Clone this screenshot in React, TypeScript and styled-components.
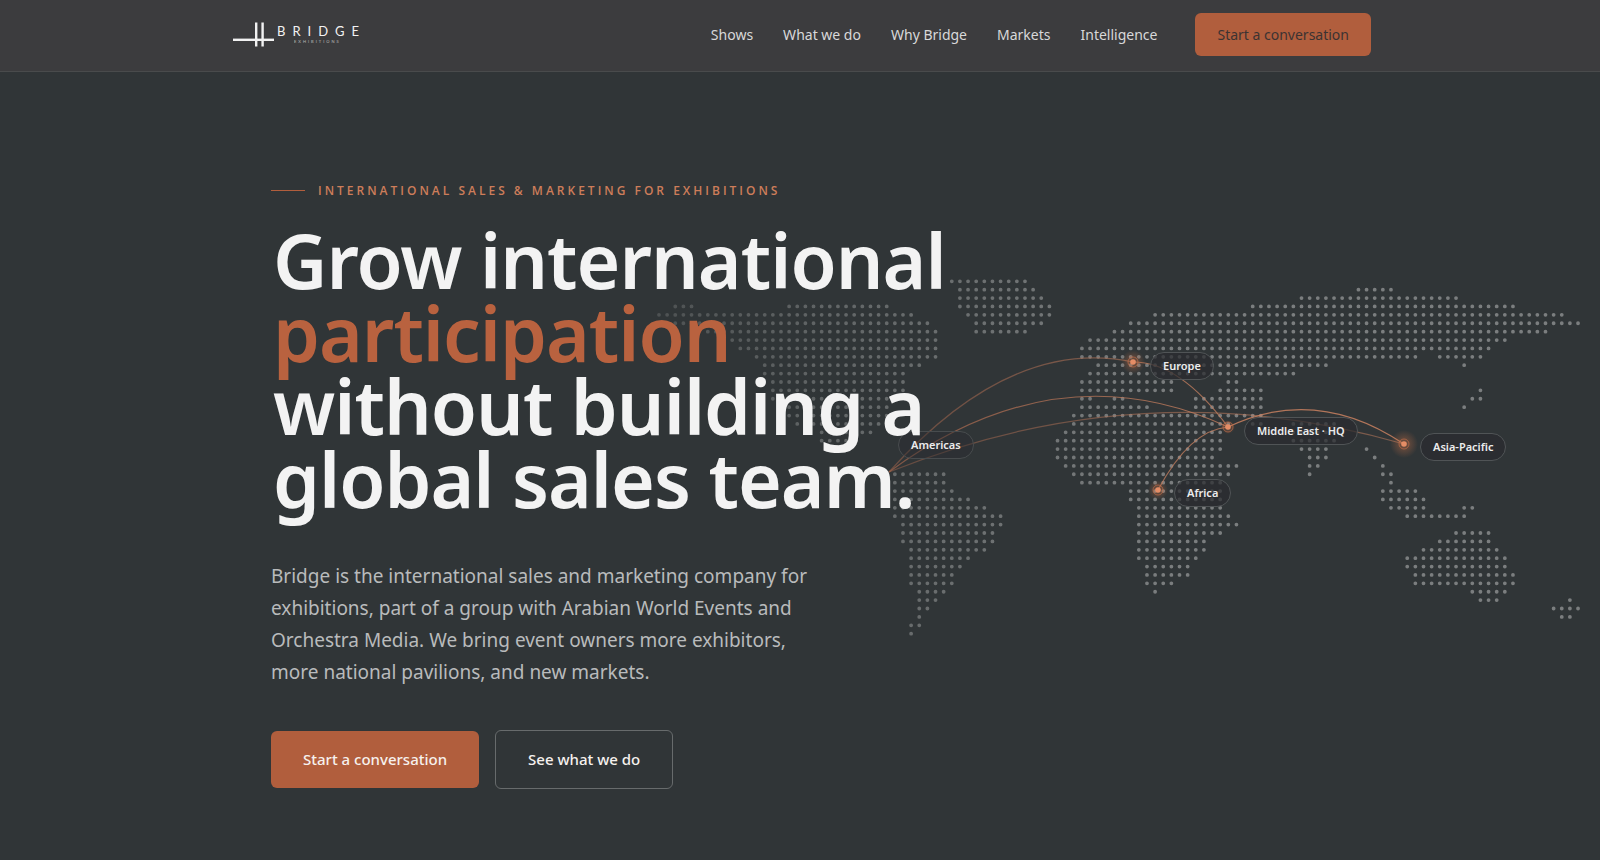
import React from 'react';
import styled, { createGlobalStyle } from 'styled-components';

const GlobalStyle = createGlobalStyle`
  *, *::before, *::after { box-sizing: border-box; }
  body { margin: 0; background: #303537; color: #f2f2f2; font-family: 'Noto Sans', sans-serif; }
`;

const accent = '#b15e3d';

const Page = styled.div`
  display: flex;
  flex-direction: column;
  min-height: 100vh;
`;

const Header = styled.header`
  background: #3c3c3e;
  border-bottom: 1px solid #494b4c;
`;

const HeaderInner = styled.div`
  display: flex;
  align-items: center;
  justify-content: space-between;
  max-width: 1142px;
  margin: 0 auto;
  padding: 13px 0 15px;
`;

const LogoLink = styled.a`
  display: flex;
  padding-left: 4px;
  color: #f2f2f2;
`;

const Nav = styled.nav`
  display: flex;
  align-items: center;
  gap: 30px;
`;

const NavLink = styled.a`
  color: #d8d8d9;
  font-size: 14px;
  font-weight: 400;
  line-height: 20px;
  text-decoration: none;
`;

const Button = styled.button<{ $size: 'small' | 'large'; $outline?: boolean }>`
  font-family: inherit;
  font-size: ${(p) => (p.$size === 'small' ? 14 : 15)}px;
  font-weight: ${(p) => (p.$size === 'small' ? 400 : 500)};
  line-height: ${(p) => (p.$size === 'small' ? 19 : 25)}px;
  padding: ${(p) => (p.$size === 'small' ? '12px 22px' : '16px 32px')};
  color: ${(p) => (p.$size === 'small' ? '#3c3332' : '#f6f1ee')};
  background: ${(p) => (p.$outline ? 'transparent' : accent)};
  border: ${(p) => (p.$outline ? '1px solid #676b6c' : '0')};
  border-radius: 6px;
  cursor: pointer;
`;

const NavButton = styled(Button)`
  margin-left: 8px;
`;

const Hero = styled.main`
  position: relative;
  flex: 1;
  display: flex;
  align-items: center;
  overflow: hidden;
  background: #303537;
`;

const HeroInner = styled.div`
  position: relative;
  width: 100%;
  max-width: 1142px;
  margin: 0 auto;
  padding: 75px 42px 38px;
`;

const Eyebrow = styled.p`
  display: flex;
  align-items: center;
  gap: 13px;
  margin: 0 0 23px;
  color: #cd7d5a;
  font-family: 'Open Sans', sans-serif;
  font-size: 12px;
  font-weight: 600;
  line-height: 20px;
  letter-spacing: 3px;
  text-transform: uppercase;

  &::before {
    content: '';
    width: 34px;
    height: 1px;
    background: ${accent};
  }
`;

const Title = styled.h1`
  margin: 0;
  padding-left: 2px;
  font-size: 75px;
  font-weight: 600;
  line-height: 73px;
  letter-spacing: -1px;
  color: #f3f3f3;
  white-space: nowrap;
`;

const TitleLine = styled.span<{ $accent?: boolean }>`
  display: block;
  color: ${(p) => (p.$accent ? '#b9623f' : 'inherit')};
`;

const Lead = styled.p`
  max-width: 560px;
  margin: 44px 0 42px;
  color: #b9bbbc;
  font-size: 19px;
  line-height: 32px;
`;

const Actions = styled.div`
  display: flex;
  align-items: center;
  gap: 16px;
`;

const MapLayer = styled.div`
  position: absolute;
  top: 50%;
  right: 0;
  width: 60%;
  aspect-ratio: 960 / 432;
  transform: translateY(-50%);
`;

const MapDrawing = styled.svg`
  display: block;
  width: 100%;
  height: 100%;
`;

const Pill = styled.span<{ $x: number; $y: number; $faint?: boolean }>`
  position: absolute;
  left: ${(p) => ((p.$x - 640) / 960) * 100}%;
  top: ${(p) => ((p.$y - 250) / 432) * 100}%;
  padding: 5px 12px;
  border: 1px solid ${(p) => (p.$faint ? '#484c4e' : '#505456')};
  border-radius: 14px;
  background: rgba(42, 43, 47, ${(p) => (p.$faint ? 0.4 : 0.72)});
  color: #ececec;
  font-size: 11px;
  font-weight: 600;
  line-height: 16px;
  white-space: nowrap;
`;

// Land cells of the dotted map: one entry per row, as [first, last] column spans.
const land: [number, number][][] = [
  [[36, 45]],
  [[37, 46], [86, 90]],
  [[37, 47], [79, 98]],
  [[2, 4], [16, 28], [37, 48], [73, 105]],
  [[0, 31], [38, 48], [61, 111]],
  [[2, 33], [39, 47], [58, 113]],
  [[6, 34], [39, 45], [56, 109]],
  [[9, 34], [53, 104]],
  [[10, 34], [52, 102]],
  [[12, 34], [52, 93], [96, 101]],
  [[13, 32], [54, 82], [99, 99]],
  [[13, 30], [53, 78]],
  [[14, 30], [52, 63], [70, 71]],
  [[14, 30], [52, 63], [69, 74], [101, 101]],
  [[14, 29], [52, 53], [56, 57], [66, 74], [100, 101]],
  [[16, 28], [52, 60], [66, 74], [99, 99]],
  [[16, 28], [51, 74]],
  [[17, 27], [51, 70], [73, 74], [78, 83]],
  [[20, 26], [50, 69], [78, 83]],
  [[20, 23], [49, 69], [78, 83]],
  [[49, 69], [79, 82], [87, 87]],
  [[49, 68], [80, 82], [88, 88]],
  [[50, 71], [80, 81], [89, 89]],
  [[29, 35], [51, 70], [80, 80], [89, 90]],
  [[29, 35], [52, 69], [90, 90]],
  [[29, 36], [58, 69], [89, 93]],
  [[29, 38], [58, 69], [89, 94]],
  [[29, 40], [59, 69], [90, 94], [99, 100]],
  [[29, 42], [59, 70], [92, 99]],
  [[30, 42], [59, 71]],
  [[30, 41], [59, 69], [98, 102]],
  [[30, 41], [59, 67], [96, 102]],
  [[31, 40], [59, 67], [94, 103]],
  [[31, 38], [59, 66], [92, 104]],
  [[31, 37], [60, 65], [92, 104]],
  [[31, 36], [60, 65], [93, 105]],
  [[31, 36], [60, 63], [93, 105]],
  [[32, 35], [61, 61], [100, 104]],
  [[32, 34], [101, 103], [112, 112]],
  [[32, 33], [110, 113]],
  [[32, 32], [111, 112]],
  [[31, 32]],
  [[31, 31]],
];

const dots = land.flatMap((spans, row) =>
  spans.flatMap(([first, last]) =>
    Array.from({ length: last - first + 1 }, (_, i) => ({
      x: 659 + (first + i) * 8.133,
      y: 281.3 + row * 8.39,
    })),
  ),
);

const routes = [
  { d: 'M889 472 Q1011 336 1133 362', opacity: 0.55 },
  { d: 'M889 472 Q1058 348 1228 427', opacity: 0.75 },
  { d: 'M889 472 Q1146 369 1404 444', opacity: 0.5 },
  { d: 'M1133 362 Q1180 362 1228 427', opacity: 0.75 },
  { d: 'M1228 427 Q1316 385 1404 444', opacity: 0.85 },
  { d: 'M1228 427 Q1190 430 1158 490', opacity: 0.75 },
];

const hubs = [
  { x: 1133, y: 362, glow: 12 },
  { x: 1228, y: 427, glow: 7 },
  { x: 1158, y: 490, glow: 10 },
  { x: 1404, y: 444, glow: 14 },
];

const regions = [
  { name: 'Americas', x: 898, y: 431, faint: true },
  { name: 'Europe', x: 1150, y: 352 },
  { name: 'Middle East · HQ', x: 1244, y: 417 },
  { name: 'Africa', x: 1174, y: 479 },
  { name: 'Asia-Pacific', x: 1420, y: 433 },
];

function WorldMap() {
  return (
    <MapLayer>
      <MapDrawing viewBox="640 250 960 432" aria-hidden="true">
        <defs>
          <linearGradient id="dotFade" gradientUnits="userSpaceOnUse" x1="650" y1="0" x2="1180" y2="0">
            <stop offset="0" stopColor="#4c5051" />
            <stop offset="0.35" stopColor="#626667" />
            <stop offset="1" stopColor="#7b7e7f" />
          </linearGradient>
          <linearGradient id="routeFade" gradientUnits="userSpaceOnUse" x1="880" y1="0" x2="1200" y2="0">
            <stop offset="0" stopColor="#9a6049" />
            <stop offset="1" stopColor="#c9805f" />
          </linearGradient>
          <radialGradient id="glow">
            <stop offset="0" stopColor="#d97748" stopOpacity="0.45" />
            <stop offset="1" stopColor="#d97748" stopOpacity="0" />
          </radialGradient>
        </defs>
        <g fill="url(#dotFade)">
          <path
            d={dots
              .map((p) => `M${(p.x - 1.9).toFixed(2)} ${p.y.toFixed(2)}a1.9 1.9 0 1 0 3.8 0a1.9 1.9 0 1 0 -3.8 0`)
              .join('')}
          />
        </g>
        <g fill="none" stroke="url(#routeFade)" strokeWidth="1.2">
          {routes.map((r) => (
            <path key={r.d} d={r.d} opacity={r.opacity} />
          ))}
        </g>
        {hubs.map((h) => (
          <g key={h.x}>
            <circle cx={h.x} cy={h.y} r={h.glow} fill="url(#glow)" />
            <circle cx={h.x} cy={h.y} r="5" fill="none" stroke="#c06c48" strokeOpacity="0.7" />
            <circle cx={h.x} cy={h.y} r="2.8" fill="#e58d66" />
          </g>
        ))}
      </MapDrawing>
      {regions.map((r) => (
        <Pill key={r.name} $x={r.x} $y={r.y} $faint={r.faint}>
          {r.name}
        </Pill>
      ))}
    </MapLayer>
  );
}

function Logo() {
  return (
    <LogoLink href="#" aria-label="Bridge Exhibitions">
      <svg width="144" height="26" viewBox="0 0 144 26" fill="currentColor">
        <rect x="0" y="16.6" width="41" height="2.4" />
        <rect x="22" y="0.5" width="2.4" height="24" />
        <rect x="28.4" y="0.5" width="2.4" height="24" />
        <text x="44" y="14" fontFamily="Lato, sans-serif" fontSize="13" letterSpacing="7">
          BRIDGE
        </text>
        <text x="61" y="21" fontFamily="Lato, sans-serif" fontSize="4" letterSpacing="2" opacity="0.65">
          EXHIBITIONS
        </text>
      </svg>
    </LogoLink>
  );
}

const links = ['Shows', 'What we do', 'Why Bridge', 'Markets', 'Intelligence'];

export default function App() {
  return (
    <Page>
      <GlobalStyle />
      <Header>
        <HeaderInner>
          <Logo />
          <Nav>
            {links.map((l) => (
              <NavLink key={l} href="#">
                {l}
              </NavLink>
            ))}
            <NavButton $size="small">Start a conversation</NavButton>
          </Nav>
        </HeaderInner>
      </Header>
      <Hero>
        <WorldMap />
        <HeroInner>
          <Eyebrow>International sales &amp; marketing for exhibitions</Eyebrow>
          <Title>
            <TitleLine>Grow international</TitleLine>
            <TitleLine $accent>participation</TitleLine>
            <TitleLine>without building a</TitleLine>
            <TitleLine>global sales team.</TitleLine>
          </Title>
          <Lead>
            Bridge is the international sales and marketing company for exhibitions, part of a group with Arabian World
            Events and Orchestra Media. We bring event owners more exhibitors, more national pavilions, and new markets.
          </Lead>
          <Actions>
            <Button $size="large">Start a conversation</Button>
            <Button $size="large" $outline>
              See what we do
            </Button>
          </Actions>
        </HeroInner>
      </Hero>
    </Page>
  );
}
